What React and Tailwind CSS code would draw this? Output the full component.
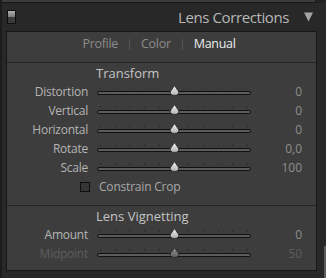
import React from "react";

const font = { fontFamily: '"Open Sans", "Noto Sans", sans-serif' };

function Thumb({ dim }) {
  return (
    <svg width="11" height="11" viewBox="0 0 11 11" className="absolute left-[72px] top-[-2px]">
      <defs>
        <linearGradient id={dim ? "tgd" : "tg"} x1="0" y1="0" x2="0" y2="1">
          <stop offset="0" stopColor={dim ? "#8c8c8c" : "#f4f4f4"} />
          <stop offset="1" stopColor={dim ? "#626262" : "#b0b0b0"} />
        </linearGradient>
      </defs>
      <path
        d="M5.5 0.6 L9.6 6.6 Q10.6 10.4 5.5 10.4 Q0.4 10.4 1.4 6.6 Z"
        fill={`url(#${dim ? "tgd" : "tg"})`}
        stroke="#1a1a1a"
        strokeWidth="0.7"
      />
    </svg>
  );
}

function Slider({ dim }) {
  return (
    <div className="relative w-[154px] h-[19px]">
      <div className="absolute left-0 right-0 top-[5px] flex justify-between px-[3px]">
        {Array.from({ length: 11 }).map((_, i) => (
          <div key={i} className={`w-px h-[2px] ${i === 5 ? "bg-transparent" : "bg-[#2c2c2c]"}`} />
        ))}
      </div>
      <div className="absolute left-0 right-0 top-[9px] h-[4px] rounded-full border border-[#121212] bg-[#5c5c5c]" />
      <div className="absolute left-0 top-[5px] w-full">
        <Thumb dim={dim} />
      </div>
    </div>
  );
}

function Row({ label, value, dim }) {
  return (
    <div className="flex items-center h-[19px] pt-[1px]">
      <div className={`w-[81px] text-right text-[12px] tracking-[-0.25px] leading-none ${dim ? "text-[#5e5e5e]" : "text-[#b4b4b4]"}`}>{label}</div>
      <div className="ml-[9px] -mt-[1px]">
        <Slider dim={dim} />
      </div>
      <div className={`w-[51px] text-right text-[12px] leading-none ${dim ? "text-[#5e5e5e]" : "text-[#8e8e8e]"}`}>{value}</div>
    </div>
  );
}

export default function App() {
  return (
    <div className="relative w-[326px] h-[278px] bg-[#282828] border-l-2 border-[#1c1c1c] overflow-hidden flex flex-col" style={font}>
      <div className="h-[3px] flex shrink-0">
        <div className="w-[314px] bg-[#3c3c3c] border-b border-[#151515] border-r border-r-[#1a1a1a]" />
        <div className="flex-1 bg-[#222222]" />
      </div>
      <div className="h-[28px] shrink-0 flex items-center">
        <div className="ml-[5px] w-[9px] h-[14px] border border-[#0f0f0f] flex flex-col">
          <div className="h-1/2 bg-gradient-to-b from-[#b0b0b0] to-[#7a7a7a]" />
          <div className="h-1/2 bg-[#3a3a3a]" />
        </div>
        <div className="flex-1" />
        <div className="text-[15px] tracking-[-0.4px] leading-none text-[#b8b8b8] pt-[1px]">Lens Corrections</div>
        <svg width="9" height="10" viewBox="0 0 9 10" className="ml-[15px] mr-[13px]">
          <path d="M0 0.5 L9 0.5 L4.5 9.5 Z" fill="#a4a4a4" />
        </svg>
      </div>
      <div className="ml-[4px] w-[311px] h-[240px] shrink-0 border border-[#161616] bg-[#3d3d3d] flex flex-col">
        <div className="h-[31px] shrink-0 border-b border-[#262626] flex items-center justify-center gap-[11px] pr-[5px] pb-[5px] text-[12.5px] tracking-[-0.3px] leading-none">
          <span className="text-[#8c8c8c]">Profile</span>
          <span className="w-px h-[11px] bg-[#555555]" />
          <span className="text-[#8c8c8c]">Color</span>
          <span className="w-px h-[11px] bg-[#555555]" />
          <span className="text-[#ececec]">Manual</span>
        </div>
        <div className="h-[143px] shrink-0 border-b border-[#262626] flex flex-col">
          <div className="h-[19px] flex items-center pl-[89px] pt-[1px] text-[13px] leading-none text-[#c4c4c4]">Transform</div>
          <Row label="Distortion" value="0" />
          <Row label="Vertical" value="0" />
          <Row label="Horizontal" value="0" />
          <Row label="Rotate" value="0,0" />
          <Row label="Scale" value="100" />
          <div className="h-[19px] flex items-center pt-[1px]">
            <div className="ml-[73px] w-[10px] h-[10px] border border-[#0e0e0e] bg-[#353535]" />
            <span className="ml-[9px] text-[12px] tracking-[-0.2px] leading-none text-[#a8a8a8]">Constrain Crop</span>
          </div>
        </div>
        <div className="flex-1 flex flex-col">
          <div className="h-[19px] flex items-center pl-[89px] pt-[1px] text-[13px] leading-none text-[#c4c4c4]">Lens Vignetting</div>
          <Row label="Amount" value="0" />
          <Row label="Midpoint" value="50" dim />
        </div>
      </div>
      <div className="absolute right-0 top-[246px] w-[2px] h-[32px] bg-[#5c5c5c]" />
    </div>
  );
}
